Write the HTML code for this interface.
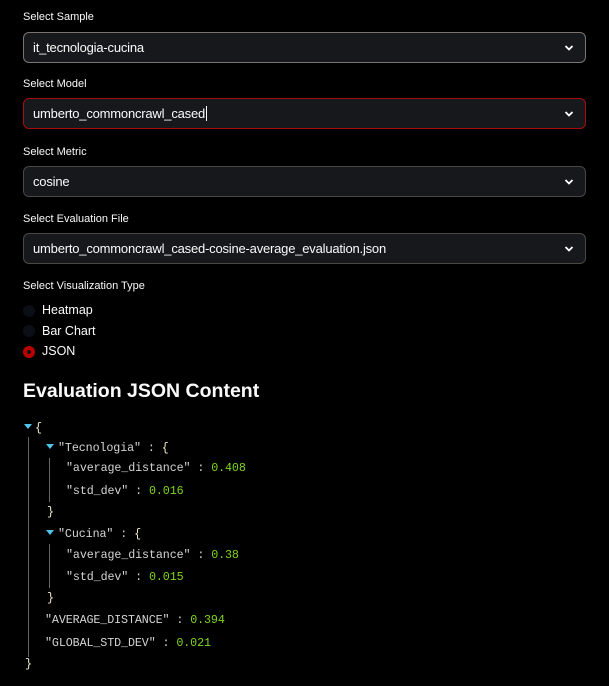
<!DOCTYPE html>
<html><head><meta charset="utf-8"><style>
body{margin:0;background:#000;width:609px;height:686px;overflow:hidden;position:relative;font-family:"Liberation Sans",sans-serif;color:#fafafa}
.lbl{position:absolute;left:23px;font-size:11px;color:#fafafa}
.sel{position:absolute;left:23px;width:561px;height:29px;background:#16181b;border:1px solid #4a4745;border-radius:6px;box-sizing:content-box}
.sel span{position:absolute;left:9px;top:7px;font-size:13px;letter-spacing:-0.2px}
.sel svg{position:absolute;right:11px;top:11px}
.rad{position:absolute;left:42px;font-size:12.5px}
.dot{position:absolute;left:23px;width:12px;height:12px;border-radius:50%;background:#0b0e17}
h1{position:absolute;left:23px;top:380px;margin:0;font-size:19.5px;font-weight:bold}
.j{position:absolute;font-family:"Liberation Mono",monospace;font-size:11.7px;color:#d4d4d4;white-space:pre;letter-spacing:-0.1px}
.n{color:#7fd61c}
.b{color:#f0e6c8}
.vl{position:absolute;width:1px;background:#666}
.tri{position:absolute;width:0;height:0;border-left:4px solid transparent;border-right:4px solid transparent;border-top:5px solid #4fc3e8}
</style></head><body>
<div class="lbl" style="top:11px">Select Sample</div>
<div class="sel" style="top:32px;border-color:#7a7470"><span>it_tecnologia-cucina</span><svg width="10" height="8" viewBox="0 0 10 8"><path d="M1.5 2 L5 5.5 L8.5 2" stroke="#fff" stroke-width="1.8" fill="none"/></svg></div>
<div class="lbl" style="top:78px">Select Model</div>
<div class="sel" style="top:98px;border-color:#a80d0d"><span>umberto_commoncrawl_cased<b style="font-weight:normal;border-left:1px solid #fff;margin-left:1px"></b></span><svg width="10" height="8" viewBox="0 0 10 8"><path d="M1.5 2 L5 5.5 L8.5 2" stroke="#fff" stroke-width="1.8" fill="none"/></svg></div>
<div class="lbl" style="top:146px">Select Metric</div>
<div class="sel" style="top:166px"><span>cosine</span><svg width="10" height="8" viewBox="0 0 10 8"><path d="M1.5 2 L5 5.5 L8.5 2" stroke="#fff" stroke-width="1.8" fill="none"/></svg></div>
<div class="lbl" style="top:213px">Select Evaluation File</div>
<div class="sel" style="top:233px"><span>umberto_commoncrawl_cased-cosine-average_evaluation.json</span><svg width="10" height="8" viewBox="0 0 10 8"><path d="M1.5 2 L5 5.5 L8.5 2" stroke="#fff" stroke-width="1.8" fill="none"/></svg></div>
<div class="lbl" style="top:280px">Select Visualization Type</div>
<div class="dot" style="top:305px"></div><div class="rad" style="top:303px">Heatmap</div>
<div class="dot" style="top:325px"></div><div class="rad" style="top:324px">Bar Chart</div>
<div class="dot" style="top:346px;background:#b00;"><div style="position:absolute;left:4px;top:4px;width:4px;height:4px;border-radius:50%;background:#111"></div></div><div class="rad" style="top:344px">JSON</div>
<h1>Evaluation JSON Content</h1>
<div class="tri" style="left:24px;top:424px"></div>
<div class="j" style="left:35px;top:421px"><span class="b">{</span></div>
<div class="vl" style="left:28px;top:437px;height:220px"></div>
<div class="tri" style="left:46px;top:444px"></div>
<div class="j" style="left:58px;top:441px">"Tecnologia" : <span class="b">{</span></div>
<div class="vl" style="left:49px;top:458px;height:44px"></div>
<div class="j" style="left:66px;top:461px">"average_distance" : <span class="n">0.408</span></div>
<div class="j" style="left:66px;top:484px">"std_dev" : <span class="n">0.016</span></div>
<div class="j" style="left:47px;top:505px"><span class="b">}</span></div>
<div class="tri" style="left:46px;top:530px"></div>
<div class="j" style="left:58px;top:527px">"Cucina" : <span class="b">{</span></div>
<div class="vl" style="left:49px;top:544px;height:44px"></div>
<div class="j" style="left:66px;top:548px">"average_distance" : <span class="n">0.38</span></div>
<div class="j" style="left:66px;top:570px">"std_dev" : <span class="n">0.015</span></div>
<div class="j" style="left:47px;top:591px"><span class="b">}</span></div>
<div class="j" style="left:45px;top:613px">"AVERAGE_DISTANCE" : <span class="n">0.394</span></div>
<div class="j" style="left:45px;top:636px">"GLOBAL_STD_DEV" : <span class="n">0.021</span></div>
<div class="j" style="left:25px;top:657px"><span class="b">}</span></div>
</body></html>
